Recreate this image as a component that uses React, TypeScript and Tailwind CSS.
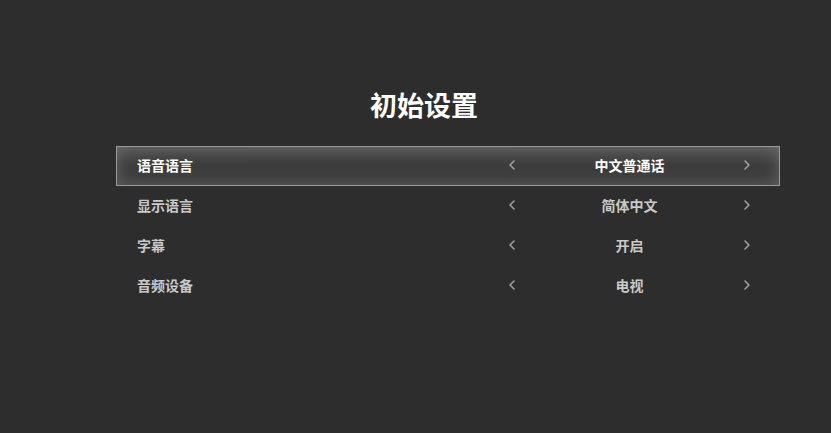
import React from "react";

type SettingRow = {
  label: string;
  value: string;
};

const rows: SettingRow[] = [
  { label: "语音语言", value: "中文普通话" },
  { label: "显示语言", value: "简体中文" },
  { label: "字幕", value: "开启" },
  { label: "音频设备", value: "电视" },
];

const Chevron = ({ dir }: { dir: "left" | "right" }) => (
  <svg width="8" height="12" viewBox="0 0 8 12" className="shrink-0">
    <polyline
      points={dir === "left" ? "6,2 2,6 6,10" : "2,2 6,6 2,10"}
      fill="none"
      stroke="#a0a0a0"
      strokeWidth="1.6"
      strokeLinejoin="round"
      strokeLinecap="round"
    />
  </svg>
);

const Row = ({ row, active }: { row: SettingRow; active: boolean }) => {
  return (
    <div
      className={
        "flex items-center h-[40px] pb-[2px] pl-[20px] pr-[28px] " +
        (active
          ? "border border-[#9a9a9a] bg-gradient-to-b from-[#4a4a4a] via-[#3c3c3c] to-[#383838] shadow-[inset_0_0_18px_rgba(255,255,255,0.22)]"
          : "border border-transparent")
      }
    >
      <span
        className={
          "flex-1 text-[14px] font-bold " +
          (active ? "text-white" : "text-[#c9c9c9]")
        }
      >
        {row.label}
      </span>
      <div className="flex items-center w-[243px]">
        <Chevron dir="left" />
        <span
          className={
            "flex-1 text-center text-[14px] font-bold " +
            (active ? "text-white" : "text-[#c9c9c9]")
          }
        >
          {row.value}
        </span>
        <Chevron dir="right" />
      </div>
    </div>
  );
};

export default function App() {
  return (
    <div
      className="w-[831px] h-[433px] bg-[#2d2d2d] overflow-hidden"
      style={{ fontFamily: '"Noto Sans CJK SC", "Noto Sans", sans-serif' }}
    >
      <h1 className="pt-[85px] ml-[17px] h-[125px] leading-[40px] text-center text-[27px] font-bold text-white">
        初始设置
      </h1>
      <div className="ml-[116px] mt-[21px] w-[664px] flex flex-col">
        {rows.map((row, i) => (
          <Row key={row.label} row={row} active={i === 0} />
        ))}
      </div>
    </div>
  );
}
